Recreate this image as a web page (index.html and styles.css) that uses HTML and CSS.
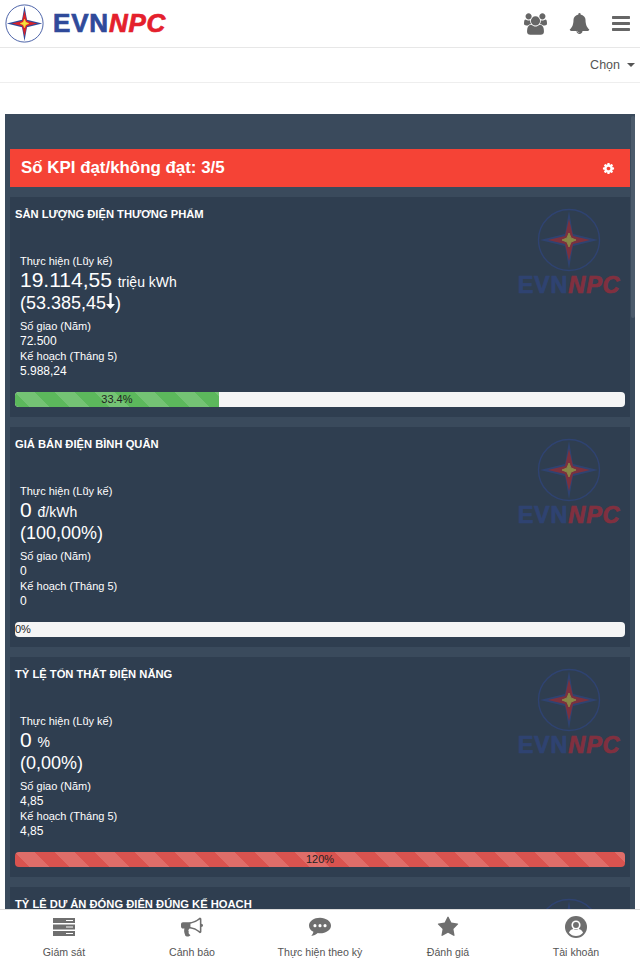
FILE: index.html
```html
<!DOCTYPE html>
<html lang="en">

<head>
    <meta charset="UTF-8">
    <meta name="viewport" content="width=device-width, initial-scale=1.0">
    <title>EVNNPC</title>
    <link rel="stylesheet" href="styles.css">
</head>

<body>
    <svg class="defs" width="0" height="0">
        <symbol id="star-mark" viewBox="0 0 64 64">
            <circle cx="32" cy="32" r="30.5" fill="none" stroke="#2f4a9a" stroke-width="1.4"/>
            <path d="M32 3 L36 26 L61 32 L36 38 L32 61 L28 38 L3 32 L28 26 Z" fill="#2f4a9a"/>
            <path d="M32 11 L36 28 L53 32 L36 36 L32 53 L28 36 L11 32 L28 28 Z" fill="#d8232a"/>
            <path d="M32 25 L34 30 L39 32 L34 34 L32 39 L30 34 L25 32 L30 30 Z" fill="#f6e33a" stroke="#f6e33a"/>
        </symbol>
        <symbol id="cog" viewBox="0 0 1792 1792">
            <path d="M1152 896q0-106-75-181t-181-75-181 75-75 181 75 181 181 75 181-75 75-181zm512-109v222q0 12-8 23t-20 13l-185 28q-19 54-39 91 35 50 107 138 10 12 10 25t-9 23q-27 37-99 108t-94 71q-12 0-26-9l-138-108q-44 23-91 38-16 136-29 186-7 28-36 28h-222q-14 0-24.5-8.5t-11.5-21.5l-28-184q-49-16-90-37l-141 107q-10 9-25 9-14 0-25-11-126-114-165-168-7-10-7-23 0-12 8-23 15-21 51-66.5t54-70.5q-27-50-41-99l-183-27q-13-2-21-12.5t-8-23.5v-222q0-12 8-23t19-13l186-28q14-46 39-92-40-57-107-138-10-12-10-24 0-10 9-23 26-36 98.5-107.5t94.5-71.5q13 0 26 10l138 107q44-23 91-38 16-136 29-186 7-28 36-28h222q14 0 24.5 8.5t11.5 21.5l28 184q49 16 90 37l142-107q9-9 24-9 13 0 25 10 129 119 165 170 7 8 7 22 0 12-8 23-15 21-51 66.5t-54 70.5q26 50 41 98l183 28q13 2 21 12.5t8 23.5z"/>
        </symbol>
    </svg>

    <header class="topbar">
        <div class="brand">
            <svg class="brand-mark"><use href="#star-mark"/></svg>
            <span class="brand-name">EVN<i>NPC</i></span>
        </div>
        <div class="top-icons">
            <svg class="icon-users" viewBox="0 0 1920 1792"><path d="M593 896q-162 5-265 128h-134q-82 0-138-40.5t-56-118.5q0-353 124-353 6 0 43.5 21t97.5 42.5 119 21.5q67 0 133-23-5 37-5 66 0 139 81 256zm1071 637q0 120-73 189.5t-194 69.5h-874q-121 0-194-69.5t-73-189.5q0-53 3.5-103.5t14-109 26.5-108.5 43-97.5 62-81 85.5-53.5 111.5-20q10 0 43 21.5t73 48 107 48 135 21.5 135-21.5 107-48 73-48 43-21.5q61 0 111.5 20t85.5 53.5 62 81 43 97.5 26.5 108.5 14 109 3.5 103.5zm-1024-1277q0 106-75 181t-181 75-181-75-75-181 75-181 181-75 181 75 75 181zm704 384q0 159-112.5 271.5t-271.5 112.5-271.5-112.5-112.5-271.5 112.5-271.5 271.5-112.5 271.5 112.5 112.5 271.5zm576 225q0 78-56 118.5t-138 40.5h-134q-103-123-265-128 81-117 81-256 0-29-5-66 66 23 133 23 59 0 119-21.5t97.5-42.5 43.5-21q124 0 124 353zm-128-609q0 106-75 181t-181 75-181-75-75-181 75-181 181-75 181 75 75 181z"/></svg>
            <svg class="icon-bell" viewBox="0 0 1792 1792"><path d="M912 1696q0-16-16-16-59 0-101.5-42.5t-42.5-101.5q0-16-16-16t-16 16q0 73 51.5 124.5t124.5 51.5q16 0 16-16zm816-288q0 52-38 90t-90 38h-448q0 106-75 181t-181 75-181-75-75-181h-448q-52 0-90-38t-38-90q50-42 91-88t85-119.5 74.5-158.5 50-206 19.5-260q0-152 117-282.5t307-158.5q-8-19-8-39 0-40 28-68t68-28 68 28 28 68q0 20-8 39 190 28 307 158.5t117 282.5q0 139 19.5 260t50 206 74.5 158.5 85 119.5 91 88z"/></svg>
            <svg class="icon-bars" viewBox="0 0 1536 1792"><path d="M1536 1344v128q0 26-19 45t-45 19h-1408q-26 0-45-19t-19-45v-128q0-26 19-45t45-19h1408q26 0 45 19t19 45zm0-512v128q0 26-19 45t-45 19h-1408q-26 0-45-19t-19-45v-128q0-26 19-45t45-19h1408q26 0 45 19t19 45zm0-512v128q0 26-19 45t-45 19h-1408q-26 0-45-19t-19-45v-128q0-26 19-45t45-19h1408q26 0 45 19t19 45z"/></svg>
        </div>
    </header>

    <div class="subbar">
        <span>Chọn</span><span class="caret"></span>
    </div>

    <main class="content">
        <div class="panel">
            <div class="kpi-head">
                <span>Số KPI đạt/không đạt: 3/5</span>
                <svg class="cog"><use href="#cog"/></svg>
            </div>

            <section class="card">
                <div class="watermark">
                    <svg class="wm-mark"><use href="#star-mark"/></svg>
                    <span class="wm-name">EVN<i>NPC</i></span>
                </div>
                <h3>SẢN LƯỢNG ĐIỆN THƯƠNG PHẨM</h3>
                <div class="figures">
                    <div class="label">Thực hiện (Lũy kế)</div>
                    <div class="value">19.114,55 <small>triệu kWh</small></div>
                    <div class="delta">(53.385,45<svg class="arrow" viewBox="0 0 10 18"><path d="M3.7 0h2.6v12.5H10L5 18 0 12.5h3.7z"/></svg>)</div>
                    <div class="label gap">Số giao (Năm)</div>
                    <div>72.500</div>
                    <div class="label">Kế hoạch (Tháng 5)</div>
                    <div>5.988,24</div>
                </div>
                <div class="progress"><div class="bar bar-green" style="width: 33.4%">33.4%</div></div>
            </section>

            <section class="card">
                <div class="watermark">
                    <svg class="wm-mark"><use href="#star-mark"/></svg>
                    <span class="wm-name">EVN<i>NPC</i></span>
                </div>
                <h3>GIÁ BÁN ĐIỆN BÌNH QUÂN</h3>
                <div class="figures">
                    <div class="label">Thực hiện (Lũy kế)</div>
                    <div class="value">0 <small>đ/kWh</small></div>
                    <div class="delta">(100,00%)</div>
                    <div class="label gap">Số giao (Năm)</div>
                    <div>0</div>
                    <div class="label">Kế hoạch (Tháng 5)</div>
                    <div>0</div>
                </div>
                <div class="progress"><div class="bar bar-empty">0%</div></div>
            </section>

            <section class="card">
                <div class="watermark">
                    <svg class="wm-mark"><use href="#star-mark"/></svg>
                    <span class="wm-name">EVN<i>NPC</i></span>
                </div>
                <h3>TỶ LỆ TỔN THẤT ĐIỆN NĂNG</h3>
                <div class="figures">
                    <div class="label">Thực hiện (Lũy kế)</div>
                    <div class="value">0 <small>%</small></div>
                    <div class="delta">(0,00%)</div>
                    <div class="label gap">Số giao (Năm)</div>
                    <div>4,85</div>
                    <div class="label">Kế hoạch (Tháng 5)</div>
                    <div>4,85</div>
                </div>
                <div class="progress"><div class="bar bar-red" style="width: 100%">120%</div></div>
            </section>

            <section class="card">
                <div class="watermark">
                    <svg class="wm-mark"><use href="#star-mark"/></svg>
                    <span class="wm-name">EVN<i>NPC</i></span>
                </div>
                <h3>TỶ LỆ DỰ ÁN ĐÓNG ĐIỆN ĐÚNG KẾ HOẠCH</h3>
            </section>
            <div class="scrollbar"></div>
        </div>
    </main>

    <nav class="tabs">
        <a class="tab">
            <svg viewBox="0 0 22 18"><path fill-rule="evenodd" d="M0 0h22v5H0zM13 2v1h7V2zM0 6.500h22v5H0zM13 8.500v1h7v-1zM0 13h22v5H0zM13 15v1h7v-1z"/></svg>
            <span>Giám sát</span>
        </a>
        <a class="tab">
            <svg viewBox="0 0 1792 1792"><path d="M1664 640q53 0 90.500 37.500t37.500 90.500-37.500 90.500-90.500 37.500v384q0 52-38 90t-90 38q-417-347-812-380-58 19-91 66t-31 100.500 40 92.500q-20 33-23 65.500t6 58 33.500 55 48 50 61.500 50.500q-29 58-111.500 83t-168.500 11.500-132-55.500q-7-23-29.500-87.500t-32-94.500-23-89-15-101 3.500-98.500 22-110.500h-122q-66 0-113-47t-47-113v-192q0-66 47-113t113-47h480q435 0 896-384 52 0 90 38t38 90v384zm-128 604v-954q-394 302-768 343v270q377 42 768 341z"/></svg>
            <span>Cảnh báo</span>
        </a>
        <a class="tab">
            <svg viewBox="0 0 24 22"><path d="M12 1C5.400 1 0 4.800 0 9.500c0 2.800 1.900 5.200 4.800 6.800-.3 1.700-1.200 3.300-2.300 4.500 2.700-.3 5.200-1.400 7.100-3.200.8.100 1.600.2 2.400.2 6.600 0 12-3.800 12-8.300S18.600 1 12 1z"/><circle cx="6.500" cy="9.500" r="1.700" fill="#fff"/><circle cx="12" cy="9.500" r="1.700" fill="#fff"/><circle cx="17.500" cy="9.500" r="1.700" fill="#fff"/></svg>
            <span>Thực hiện theo kỳ</span>
        </a>
        <a class="tab">
            <svg viewBox="0 0 1792 1792"><path d="M1728 647q0 22-26 48l-363 354 86 500q1 7 1 20 0 21-10.500 35.500t-30.500 14.500q-19 0-40-12l-449-236-449 236q-22 12-40 12-21 0-31.500-14.500t-10.500-35.500q0-6 2-20l86-500-364-354q-25-27-25-48 0-37 56-46l502-73 225-455q19-41 49-41t49 41l225 455 502 73q56 9 56 46z"/></svg>
            <span>Đánh giá</span>
        </a>
        <a class="tab">
            <svg viewBox="0 0 24 24"><circle cx="12" cy="12" r="12"/><circle cx="12" cy="9.800" r="5" fill="#fff"/><circle cx="12" cy="9.800" r="3.200"/><path d="M4.300 18.200c1-3 3.800-4 5.200-4 .8.700 1.600 1 2.500 1s1.700-.3 2.500-1c1.400 0 4.200 1 5.200 4-1.800 2.200-4.700 3.600-7.700 3.600s-5.900-1.400-7.700-3.600z" fill="#fff"/></svg>
            <span>Tài khoản</span>
        </a>
    </nav>
</body>

</html>
```

FILE: styles.css
```css
html, body{
    height: 100%;
}
body{
    margin: 0;
    height: 960px;
    display: flex;
    flex-direction: column;
    overflow: hidden;
    background-color: #fff;
    font-family: "Liberation Sans", Arial, sans-serif;
    font-size: 12px;
    color: #555;
}
.defs{
    position: absolute;
}
.topbar{
    height: 47px;
    flex: none;
    display: flex;
    align-items: center;
    justify-content: space-between;
    border-bottom: 1px solid #e7e7e7;
}
.brand{
    display: flex;
    align-items: center;
    padding-left: 5px;
}
.brand-mark{
    width: 39px;
    height: 39px;
}
.brand-name{
    margin-left: 9px;
    font-size: 26px;
    font-weight: bold;
    letter-spacing: .8px;
    color: #2f4a9a;
    -webkit-text-stroke: 0.7px currentColor;
}
.brand-name i, .wm-name i{
    color: #e4202c;
}
.top-icons{
    display: flex;
    align-items: center;
    gap: 22px;
    padding-right: 10px;
}
.top-icons svg{
    fill: #666;
    display: block;
}
.icon-users{
    width: 23px;
    height: 22px;
}
.icon-bell{
    width: 21px;
    height: 21px;
}
.icon-bars{
    width: 18px;
    height: 21px;
}
.subbar{
    height: 34px;
    flex: none;
    display: flex;
    align-items: center;
    justify-content: flex-end;
    padding-right: 5px;
    border-bottom: 1px solid #eee;
    font-size: 12.5px;
}
.caret{
    margin-left: 7px;
    border-top: 4px solid #555;
    border-left: 4px solid transparent;
    border-right: 4px solid transparent;
}
.content{
    flex: 1;
    min-height: 0;
    overflow: hidden;
    padding: 31px 5px 0;
}
.panel{
    position: relative;
    background-color: #3a4a5c;
    padding: 35px 5px 0;
}
.kpi-head{
    height: 38px;
    display: flex;
    align-items: center;
    justify-content: space-between;
    padding: 0 15px 0 11px;
    background-color: #f54336;
    color: #fff;
    font-size: 16.9px;
    font-weight: bold;
}
.cog{
    width: 13px;
    height: 13px;
    fill: #fff;
}
.card{
    position: relative;
    height: 220px;
    margin-top: 10px;
    box-sizing: border-box;
    padding: 10px 5px 0;
    background-color: #2f3e50;
    color: #fff;
}
.card h3{
    margin: 0;
    font-size: 11.2px;
    line-height: 14px;
    font-weight: bold;
}
.figures{
    margin-top: 33px;
    padding-left: 5px;
    height: 138px;
    line-height: 15px;
}
.label{
    font-size: 11px;
}
.value{
    font-size: 21px;
    line-height: 22px;
}
.value small{
    font-size: 14px;
}
.delta{
    font-size: 18px;
    line-height: 20px;
}
.arrow{
    width: 9px;
    height: 16px;
    fill: #fff;
}
.gap{
    margin-top: 6px;
}
.progress{
    height: 15px;
    border-radius: 4px;
    overflow: hidden;
    background-color: #f5f5f5;
    color: #222;
    font-size: 11px;
    line-height: 15px;
}
.bar{
    height: 100%;
    text-align: center;
}
.bar-green, .bar-red{
    background-image: linear-gradient(45deg, rgba(255,255,255,.15) 25%, transparent 25%, transparent 50%, rgba(255,255,255,.15) 50%, rgba(255,255,255,.15) 75%, transparent 75%, transparent);
    background-size: 40px 40px;
}
.bar-green{
    background-color: #5cb85c;
}
.bar-red{
    background-color: #d9534f;
}
.bar-empty{
    text-align: left;
}
.watermark{
    position: absolute;
    top: 11px;
    right: 10px;
    width: 102px;
    display: flex;
    flex-direction: column;
    align-items: center;
    opacity: .45;
}
.wm-mark{
    width: 64px;
    height: 64px;
}
.wm-name{
    margin-top: 2px;
    font-size: 23.500px;
    line-height: 22px;
    font-weight: bold;
    letter-spacing: .8px;
    color: #2f4a9a;
    white-space: nowrap;
    -webkit-text-stroke: 0.7px currentColor;
}
.scrollbar{
    position: absolute;
    top: 2px;
    right: 0;
    width: 4px;
    height: 202px;
    border-radius: 2px;
    background-color: #4c5b6c;
}
.tabs{
    height: 50px;
    flex: none;
    display: flex;
    position: relative;
    background-color: #fff;
    border-top: 1px solid #ddd;
}
.tab{
    flex: 1;
    display: flex;
    flex-direction: column;
    align-items: center;
    padding-top: 6px;
    font-size: 10.6px;
    color: #555;
}
.tab svg{
    width: 22px;
    height: 22px;
    fill: #6f6f6f;
    flex: none;
}
.tab span{
    margin-top: 8px;
    line-height: 13px;
}
```
